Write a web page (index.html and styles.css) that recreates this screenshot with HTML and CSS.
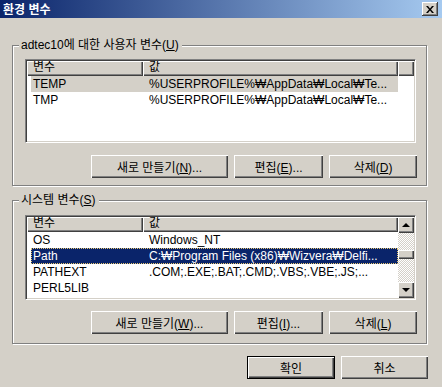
FILE: index.html
```html
<!DOCTYPE html>
<html lang="ko">

<head>
  <meta charset="UTF-8">
  <meta name="viewport" content="width=device-width, initial-scale=1.0">
  <title>환경 변수</title>
  <link rel="stylesheet" href="styles.css">
</head>

<body>
  <div class="window">
    <div class="titlebar">
      <span class="title">환경 변수</span>
      <button class="close" aria-label="닫기">
        <svg width="8" height="7" viewBox="0 0 8 7">
          <path d="M0 0h2l2 2.5L6 0h2L5 3.5 8 7H6L4 4.5 2 7H0l3-3.5z" fill="#000" />
        </svg>
      </button>
    </div>

    <div class="content">
      <fieldset class="group group--user">
        <legend>adtec10에 대한 사용자 변수(<u>U</u>)</legend>
        <div class="list list--user">
          <div class="list-main">
            <div class="list-header">
              <span class="head head-name">변수</span>
              <span class="head head-value">값</span>
              <span class="head head-fill"></span>
            </div>
            <div class="row row--dim">
              <span class="cell cell-name">TEMP</span>
              <span class="cell cell-value">%USERPROFILE%₩AppData₩Local₩Te...</span>
            </div>
            <div class="row">
              <span class="cell cell-name">TMP</span>
              <span class="cell cell-value">%USERPROFILE%₩AppData₩Local₩Te...</span>
            </div>
          </div>
        </div>
        <div class="buttons">
          <button class="btn btn--wide">새로 만들기(<u>N</u>)...</button>
          <button class="btn btn--mid">편집(<u>E</u>)...</button>
          <button class="btn">삭제(<u>D</u>)</button>
        </div>
      </fieldset>

      <fieldset class="group group--system">
        <legend>시스템 변수(<u>S</u>)</legend>
        <div class="list list--system">
          <div class="list-main">
            <div class="list-header">
              <span class="head head-name">변수</span>
              <span class="head head-value">값</span>
            </div>
            <div class="row">
              <span class="cell cell-name">OS</span>
              <span class="cell cell-value">Windows_NT</span>
            </div>
            <div class="row row--active">
              <span class="cell cell-name">Path</span>
              <span class="cell cell-value">C:₩Program Files (x86)₩Wizvera₩Delfi...</span>
            </div>
            <div class="row">
              <span class="cell cell-name">PATHEXT</span>
              <span class="cell cell-value">.COM;.EXE;.BAT;.CMD;.VBS;.VBE;.JS;...</span>
            </div>
            <div class="row">
              <span class="cell cell-name">PERL5LIB</span>
              <span class="cell cell-value"></span>
            </div>
            <div class="row">
              <span class="cell cell-name">PROCESSOR_A...</span>
              <span class="cell cell-value">AMD64</span>
            </div>
          </div>
          <div class="scrollbar">
            <span class="sb-btn sb-up"><i class="arrow arrow--up"></i></span>
            <span class="sb-track"><span class="sb-thumb"></span></span>
            <span class="sb-btn sb-down"><i class="arrow arrow--down"></i></span>
          </div>
        </div>
        <div class="buttons">
          <button class="btn btn--wide">새로 만들기(<u>W</u>)...</button>
          <button class="btn btn--mid">편집(<u>I</u>)...</button>
          <button class="btn">삭제(<u>L</u>)</button>
        </div>
      </fieldset>

      <div class="dialog-buttons">
        <button class="btn btn--default">확인</button>
        <button class="btn btn--cancel">취소</button>
      </div>
    </div>
  </div>
</body>

</html>
```

FILE: styles.css
```css
* {
  box-sizing: border-box;
}

body {
  margin: 0;
  padding: 0;
  background-color: #D4D0C8;
  font-family: 'Liberation Sans', 'Noto Sans CJK KR', sans-serif;
  font-size: 12px;
  color: #000;
}

.window {
  width: 442px;
  height: 387px;
  background-color: #D4D0C8;
  overflow: hidden;
}

.titlebar {
  height: 18px;
  display: flex;
  align-items: center;
  justify-content: space-between;
  padding: 0 4px 0 3px;
  background: linear-gradient(to right, #0A246A, #A6CAF0);
}

.title {
  color: #fff;
  font-weight: bold;
  font-size: 12px;
  line-height: 14px;
  font-family: 'Noto Sans CJK KR', sans-serif;
}

.close {
  width: 16px;
  height: 14px;
  padding: 0;
  margin: 0;
  display: flex;
  align-items: center;
  justify-content: center;
  background-color: #D4D0C8;
  border: 0;
  box-shadow: inset -1px -1px 0 #404040, inset 1px 1px 0 #fff, inset -2px -2px 0 #808080;
}

.content {
  padding: 0 15px 0 12px;
  display: flex;
  flex-direction: column;
}

/* group box */
.group {
  margin: 0;
  min-width: 0;
  border: 1px solid #808080;
  box-shadow: inset 1px 1px 0 #fff, 1px 1px 0 #fff;
  padding: 7px 10px 7px 12px;
}

.group legend {
  margin-left: -6px;
  padding: 0 3px 0 2px;
  line-height: 14px;
  background-color: #D4D0C8;
}

.group--user {
  margin-top: 20px;
}

.group--system {
  margin-top: 7px;
  padding-top: 8px;
  padding-bottom: 9px;
}

/* list views */
.list {
  display: flex;
  background-color: #fff;
  border: 1px solid;
  border-color: #808080 #fff #fff #808080;
  box-shadow: inset 1px 1px 0 #404040, inset -1px -1px 0 #D4D0C8;
  padding: 1px;
}

.list--user {
  height: 84px;
}

.list--system {
  height: 85px;
}

.list-main {
  flex: 1;
  overflow: hidden;
}

.list-header {
  display: flex;
  height: 15px;
}

.head {
  height: 15px;
  line-height: 13px;
  padding-left: 6px;
  background-color: #D4D0C8;
  box-shadow: inset 1px 1px 0 #fff, inset -1px -1px 0 #404040, inset -2px -2px 0 #808080;
}

.head-name {
  width: 116px;
}

.head-value {
  width: 255px;
}

.head-fill {
  flex: 1;
}

.list--system .head-value {
  flex: 1;
}

.row {
  display: flex;
  height: 16px;
  line-height: 16px;
  margin-left: 4px;
  width: 367px;
  white-space: nowrap;
}

.cell {
  overflow: hidden;
}

.cell-name {
  width: 112px;
  padding-left: 2px;
}

.cell-value {
  flex: 1;
  padding-left: 6px;
}

.row--dim {
  background-color: #D4D0C8;
}

.row--active {
  background-color: #0A246A;
  color: #fff;
  outline: 1px dotted #E8C870;
  outline-offset: -1px;
}

/* scroll bar */
.scrollbar {
  width: 16px;
  display: flex;
  flex-direction: column;
}

.sb-btn {
  height: 16px;
  display: flex;
  align-items: center;
  justify-content: center;
  background-color: #D4D0C8;
  box-shadow: inset 1px 1px 0 #fff, inset -1px -1px 0 #404040, inset -2px -2px 0 #808080;
}

.sb-track {
  flex: 1;
  background-color: #fff;
  background-image: conic-gradient(#fff 25%, #D4D0C8 0 50%, #fff 0 75%, #D4D0C8 0);
  background-size: 2px 2px;
}

.sb-thumb {
  display: block;
  height: 9px;
  margin-top: 17px;
  background-color: #D4D0C8;
  box-shadow: inset 1px 1px 0 #fff, inset -1px -1px 0 #404040, inset -2px -2px 0 #808080;
}

.arrow {
  width: 0;
  height: 0;
  border-left: 4px solid transparent;
  border-right: 4px solid transparent;
}

.arrow--up {
  border-bottom: 4px solid #000;
}

.arrow--down {
  border-top: 4px solid #000;
}

/* buttons */
.buttons {
  display: flex;
  justify-content: flex-end;
  gap: 6px;
  margin-top: 12px;
  margin-right: -1px;
}

.group--system .buttons {
  margin-top: 11px;
}

.btn {
  width: 88px;
  height: 23px;
  padding: 0;
  margin: 0;
  border: 0;
  font-family: 'Liberation Sans', 'Noto Sans CJK KR', sans-serif;
  font-size: 12px;
  color: #000;
  background-color: #D4D0C8;
  box-shadow: inset 1px 1px 0 #fff, inset -1px -1px 0 #404040, inset -2px -2px 0 #808080;
}

.btn--wide {
  width: 137px;
}

.btn--mid {
  width: 89px;
}

.dialog-buttons {
  display: flex;
  justify-content: flex-end;
  gap: 6px;
  margin-top: 12px;
  margin-right: -1px;
}

.btn--default {
  border: 1px solid #000;
  box-shadow: inset 1px 1px 0 #fff, inset -1px -1px 0 #404040, inset -2px -2px 0 #808080;
}

.btn--cancel {
  width: 87px;
}
```
